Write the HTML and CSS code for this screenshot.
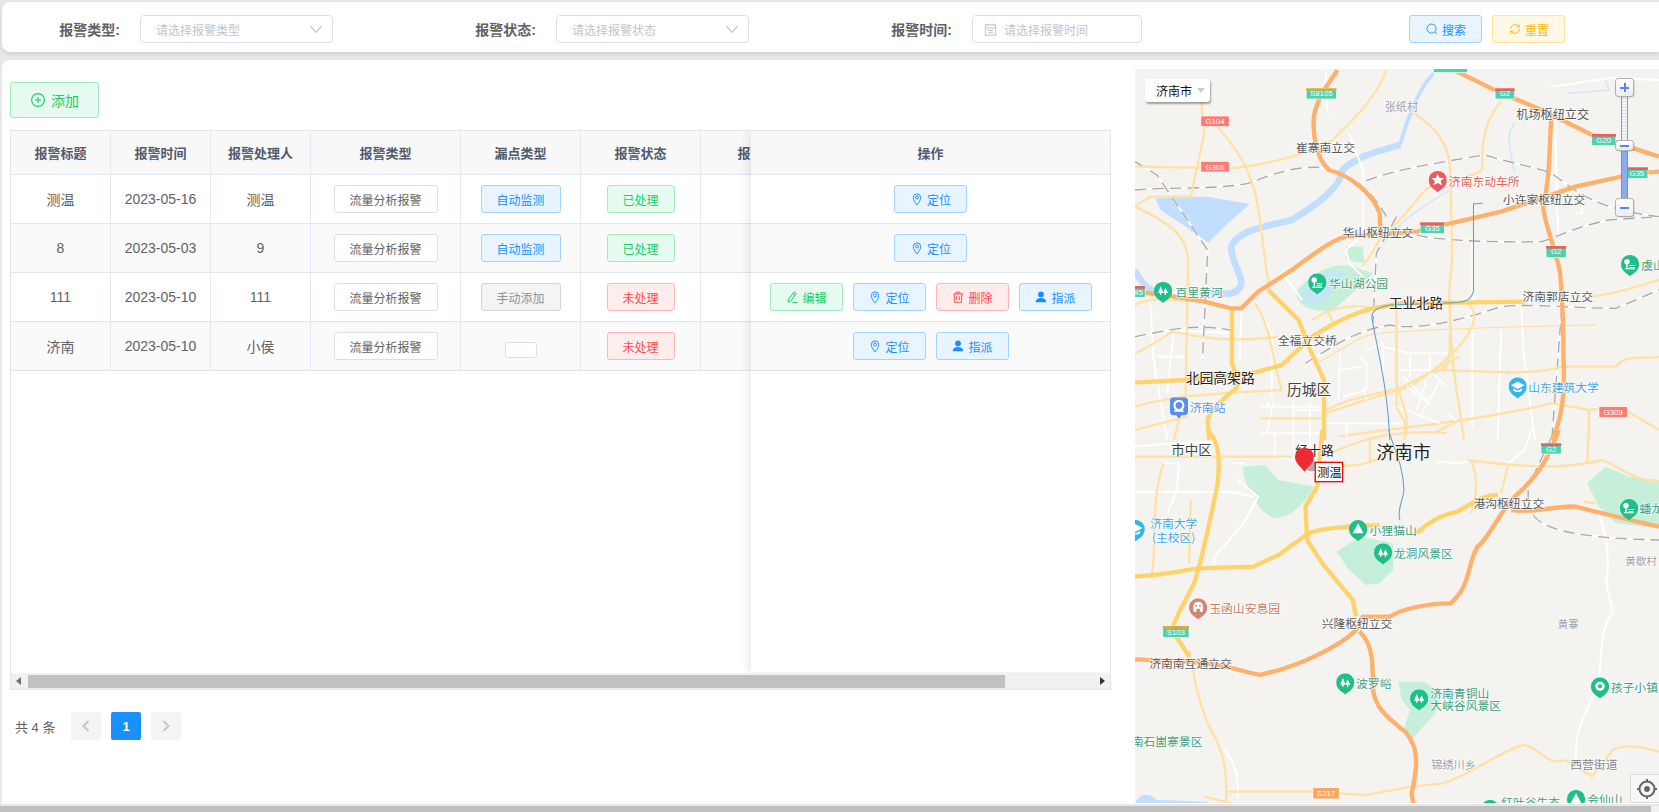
FILE: index.html
```html
<!DOCTYPE html>
<html lang="zh-CN">
<head>
<meta charset="utf-8">
<title>报警管理</title>
<link rel="stylesheet" href="styles.css">
</head>
<body>
<svg class="defs" aria-hidden="true">
  <symbol id="i-search" viewBox="0 0 16 16"><circle cx="7.5" cy="7.5" r="5.2"/><path d="M11.4 11.4l2.4 2.4"/></symbol>
  <symbol id="i-refresh" viewBox="0 0 16 16"><path d="M3 8a5 5 0 0 1 8.6-3.5l1 1.2M13 8a5 5 0 0 1-8.6 3.5l-1-1.2"/><path d="M12.8 2.6v3.2H9.8M3.2 13.4v-3.2h3"/></symbol>
  <symbol id="i-cal" viewBox="0 0 16 16"><rect x="2.5" y="3" width="11" height="11"/><path d="M2.5 6.5h11M5 9h6M5 11.5h6M5 1.5V4M11 1.5V4"/></symbol>
  <symbol id="i-plus" viewBox="0 0 16 16"><circle cx="8" cy="8" r="6.4"/><path d="M8 5v6M5 8h6"/></symbol>
  <symbol id="i-pin" viewBox="0 0 16 16"><path d="M8 14.8C5.6 11.8 3.8 9.2 3.8 6.3a4.2 4.2 0 0 1 8.4 0c0 2.9-1.8 5.5-4.2 8.5z"/><circle cx="8" cy="6.3" r="1.7"/></symbol>
  <symbol id="i-edit" viewBox="0 0 16 16"><path d="M10.5 2L13 4 6.5 12.5 3.5 14l.4-3.4zM9 4l2.500 2M8.500 14.300h5.500"/></symbol>
  <symbol id="i-trash" viewBox="0 0 16 16"><path d="M2.500 4.500h11M5.800 4.500V2.500h4.400v2M3.800 4.500v9.500h8.400V4.500M6.500 7v4.500M9.500 7v4.500"/></symbol>
  <symbol id="i-user" viewBox="0 0 16 16"><circle class="solid" cx="8" cy="5" r="3.300"/><path class="solid" d="M1.800 14c.3-3.300 2.600-5 6.200-5s5.900 1.700 6.200 5z"/></symbol>
  <symbol id="i-chev" viewBox="0 0 16 16"><path d="M3 5.500l5 5.500 5-5.500"/></symbol>
  <symbol id="i-left" viewBox="0 0 16 16"><path d="M10.500 3L5.500 8l5 5"/></symbol>
  <symbol id="i-right" viewBox="0 0 16 16"><path d="M5.500 3l5 5-5 5"/></symbol>

  <symbol id="m-tree" viewBox="0 0 54 64"><path d="M27 64C22 57 0 50 0 27a27 27 0 0 1 54 0c0 23-22 30-27 37z"/><path class="mw" d="M20 14l-8 20h6v6h4v-6h6zM34 18l-7 16h5v6h4v-6h6z"/></symbol>
  <symbol id="m-mount" viewBox="0 0 54 64"><path d="M27 64C22 57 0 50 0 27a27 27 0 0 1 54 0c0 23-22 30-27 37z"/><path class="mw" d="M27 10L11 40h32z"/></symbol>
  <symbol id="m-park" viewBox="0 0 54 64"><path d="M27 64C22 57 0 50 0 27a27 27 0 0 1 54 0c0 23-22 30-27 37z"/><circle class="mw" cx="18" cy="20" r="8"/><path class="mw" d="M16 26h4v14h-4zM24 30h18v3H24zM26 36h14v3H26zM12 40h30v3H12z"/></symbol>
  <symbol id="m-star" viewBox="0 0 54 64"><path d="M27 64C22 57 0 50 0 27a27 27 0 0 1 54 0c0 23-22 30-27 37z"/><path class="mw" d="M27 9l5.500 12h13l-10 9 4 13L27 36l-12.500 7 4-13-10-9h13z"/></symbol>
  <symbol id="m-cap" viewBox="0 0 54 64"><path d="M27 64C22 57 0 50 0 27a27 27 0 0 1 54 0c0 23-22 30-27 37z"/><path class="mw" d="M27 13L7 24l20 11 20-11zM14 33v7c7 5 19 5 26 0v-7l-13 7z"/></symbol>
  <symbol id="m-gate" viewBox="0 0 54 64"><path d="M27 64C22 57 0 50 0 27a27 27 0 0 1 54 0c0 23-22 30-27 37z"/><path class="mw" d="M27 10c-9 0-14 6-14 14v16h9v-9h10v9h9V24c0-8-5-14-14-14zM19 20h5v5h-5zM30 20h5v5h-5z"/></symbol>
  <symbol id="m-ring" viewBox="0 0 54 64"><path d="M27 64C22 57 0 50 0 27a27 27 0 0 1 54 0c0 23-22 30-27 37z"/><circle class="mw" cx="27" cy="27" r="14"/><circle cx="27" cy="27" r="6"/></symbol>
  <symbol id="m-train" viewBox="0 0 54 64"><path d="M12 0h30a12 12 0 0 1 12 12v30a12 12 0 0 1-12 12H35l-8 10-8-10h-7A12 12 0 0 1 0 42V12A12 12 0 0 1 12 0z"/><path class="mw" d="M27 8c-10 0-16 6-16 16 0 7 3 12 6 15h-4v4h28v-4h-4c3-3 6-8 6-15 0-10-6-16-16-16zm0 6c6 0 10 4 10 10s-4 11-10 11-10-5-10-11 4-10 10-10z"/></symbol>
</svg>

<div class="page">
  <header class="filters">
    <div class="field"><span class="field-label">报警类型:</span>
      <div class="select"><span>请选择报警类型</span><svg class="ico chev"><use href="#i-chev"/></svg></div></div>
    <div class="field"><span class="field-label">报警状态:</span>
      <div class="select"><span>请选择报警状态</span><svg class="ico chev"><use href="#i-chev"/></svg></div></div>
    <div class="field"><span class="field-label">报警时间:</span>
      <div class="date"><svg class="ico"><use href="#i-cal"/></svg><span>请选择报警时间</span></div></div>
    <div class="actions">
      <button class="btn blue"><svg class="ico"><use href="#i-search"/></svg>搜索</button>
      <button class="btn orange"><svg class="ico"><use href="#i-refresh"/></svg>重置</button>
    </div>
  </header>

  <main class="panel">
    <section class="left">
      <button class="add"><svg class="ico"><use href="#i-plus"/></svg>添加</button>
      <div class="table-wrap">
        <div class="table-view">
          <table class="grid">
            <colgroup><col class="c100"><col class="c100"><col class="c100"><col class="c150"><col class="c120"><col class="c120"><col class="c126"></colgroup>
            <thead><tr><th>报警标题</th><th>报警时间</th><th>报警处理人</th><th>报警类型</th><th>漏点类型</th><th>报警状态</th><th>报警内容</th></tr></thead>
            <tbody>
              <tr><td>测温</td><td>2023-05-16</td><td>测温</td><td><span class="tag plain wide">流量分析报警</span></td><td><span class="tag blue mid">自动监测</span></td><td><span class="tag green nar">已处理</span></td><td></td></tr>
              <tr class="alt"><td>8</td><td>2023-05-03</td><td>9</td><td><span class="tag plain wide">流量分析报警</span></td><td><span class="tag blue mid">自动监测</span></td><td><span class="tag green nar">已处理</span></td><td></td></tr>
              <tr><td>111</td><td>2023-05-10</td><td>111</td><td><span class="tag plain wide">流量分析报警</span></td><td><span class="tag gray mid">手动添加</span></td><td><span class="tag red nar">未处理</span></td><td></td></tr>
              <tr class="alt"><td>济南</td><td>2023-05-10</td><td>小侯</td><td><span class="tag plain wide">流量分析报警</span></td><td><span class="tag plain empty"></span></td><td><span class="tag red nar">未处理</span></td><td></td></tr>
            </tbody>
          </table>
          <div class="fixed-col">
            <table class="grid full">
              <thead><tr><th>操作</th></tr></thead>
              <tbody>
                <tr><td><div class="ops"><button class="btn blue"><svg class="ico"><use href="#i-pin"/></svg>定位</button></div></td></tr>
                <tr class="alt"><td><div class="ops"><button class="btn blue"><svg class="ico"><use href="#i-pin"/></svg>定位</button></div></td></tr>
                <tr><td><div class="ops">
                  <button class="btn green"><svg class="ico"><use href="#i-edit"/></svg>编辑</button>
                  <button class="btn blue"><svg class="ico"><use href="#i-pin"/></svg>定位</button>
                  <button class="btn red"><svg class="ico"><use href="#i-trash"/></svg>删除</button>
                  <button class="btn blue"><svg class="ico"><use href="#i-user"/></svg>指派</button>
                </div></td></tr>
                <tr class="alt"><td><div class="ops">
                  <button class="btn blue"><svg class="ico"><use href="#i-pin"/></svg>定位</button>
                  <button class="btn blue"><svg class="ico"><use href="#i-user"/></svg>指派</button>
                </div></td></tr>
              </tbody>
            </table>
          </div>
        </div>
        <div class="hscroll">
          <span class="arrow arrow-l"></span>
          <span class="thumb"></span>
          <span class="arrow arrow-r"></span>
        </div>
      </div>
      <nav class="pager">
        <span class="total">共 4 条</span>
        <span class="pg muted"><svg class="ico"><use href="#i-left"/></svg></span>
        <span class="pg on">1</span>
        <span class="pg muted"><svg class="ico"><use href="#i-right"/></svg></span>
      </nav>
    </section>

    <section class="map">
      <svg class="map-svg" viewBox="1135 69 524 735" preserveAspectRatio="none">
        <defs>
          <path id="rail-a" d="M15 305L80 345 230 570 215 900M15 390C120 380 250 390 350 370 430 340 480 320 560 322 640 340 700 365 760 470M700 362C780 330 900 310 1050 285 1130 310 1220 325 1250 340 1340 410 1400 450 1568 470M850 525C900 540 1060 548 1220 545 1270 530 1320 500 1420 480L1568 470M790 470L730 580 720 790M15 830C120 810 180 790 300 810M520 910C600 860 670 810 770 795 850 810 950 790 1100 740 1200 730 1300 745 1440 745L1568 690M1280 740L1250 1140"/>
          <path id="rail-b" d="M1180 180V210M1195 255C1230 310 1380 325 1568 330M1250 20L1190 150"/>
        </defs>
        <rect x="1135" y="69" width="524" height="735" class="land"/>

        <g transform="translate(1130 60) scale(.3374 .3333)">
          <path class="water" d="M75 415L230 410 355 432 290 490 232 548 150 490 90 450Z"/>
          <path class="river narrow" d="M900 40C860 80 830 150 800 255"/>
          <path class="river" d="M800 255C760 270 680 280 630 330 625 380 560 430 480 480 400 500 320 510 300 560 300 620 350 660 320 690 300 705 280 705 240 695"/>
          <path class="river" d="M15 630C30 665 50 690 90 700"/>
          <path class="brook" d="M950 390C900 420 800 470 730 580"/>
          <path class="brook" d="M1140 190C1110 220 1130 280 1140 340M1300 100L1420 90 1410 60"/>
          <path class="park" d="M640 560L690 560 695 610 640 600Z"/>
          <path class="park" d="M490 700C530 640 620 590 690 630L720 640C680 680 640 720 600 750 540 760 500 740 490 700Z"/>
          <path class="lake" d="M505 700C540 645 600 615 640 640 600 680 610 720 560 730 530 740 500 730 505 700Z"/>

          <path class="white" d="M580 30L585 160M650 220L690 330 692 520 640 570 650 610 690 650M720 560L690 630M60 730L70 900 110 1140M15 830L130 810 300 820M80 890H170M130 810L110 1000M330 760L325 900M370 730L420 820 420 1010M460 650L510 720M1015 530V1100M1100 810L1090 1140M1160 740L1165 860 1200 1140M1340 420V460H1320M1260 170L1265 420 1270 530M1250 80L1420 55 1568 60"/>

          <use class="rail-base" href="#rail-a"/>
          <use class="rail" href="#rail-a"/>

          <path class="minor" d="M760 30C730 120 640 200 600 240 530 280 430 310 300 325L15 320M205 60L220 220 180 410 60 410 15 440M260 200C320 270 370 340 385 480 400 600 410 680 415 700M830 150C900 200 950 240 950 350L955 600 945 700 955 900 990 1140M1100 125C1050 180 1040 260 1045 330 1000 360 930 360 880 385L800 480 740 540 690 620M15 440C100 480 170 520 172 600L165 1000 130 1140M15 735C60 710 100 720 165 720M440 830C300 850 200 830 125 815 60 860 15 880 15 880M450 990C300 1000 150 1000 15 1040M15 1110L170 1070M370 730C420 800 420 900 450 990M585 755L610 800M1000 730C1050 770 1000 850 900 930L830 980 700 1020 580 1060M540 780C600 740 660 730 720 745M790 740L790 1040 815 1090V1140M900 930C1000 930 1200 950 1280 920L1440 920C1470 880 1520 900 1568 890M620 1130C800 1100 1000 1090 1250 1030L1360 1050 1450 1040 1568 1110M1360 1050V1140M1370 710C1450 700 1500 680 1568 660"/>
          <path class="minor thin" d="M740 820C900 805 1150 800 1380 795M550 910C620 880 680 820 740 820"/>
        </g>

        <g transform="translate(1260 300) scale(.3333)">
          <path class="white fine" d="M0 320H190M20 320L30 300M100 300V440M150 310V440M40 310L20 400M0 400H180M45 400V470M100 330H190M240 160L235 300M240 210L310 200M300 170L320 190V270L250 290M310 260L320 300M315 150L370 130V220M370 140L450 160H570M450 165V230M510 165V230M420 210H510L560 260M430 230L500 300M440 260L520 320M500 240L470 330M540 240L480 350M410 320L540 370M200 370H430M560 340L600 370M260 375V420M40 470L100 480"/>
          <path class="minor" d="M0 355H190M190 340C220 310 300 290 420 265L580 180 600 170M410 60V250L440 350V400M570 0V150L560 200 520 220M560 400C500 390 430 400 380 405 300 420 260 440 180 470M330 420V490M245 495C300 505 350 480 400 450M600 360L520 400"/>
        </g>

        <g transform="translate(1130 60) scale(.3374 .3333)">
          <path class="main" d="M15 968L160 960 360 940 450 915 540 830C600 790 660 760 720 745L800 730 1170 725"/>
          <path class="main" d="M302 750L302 910C310 930 325 970 315 985 300 1000 240 1040 230 1080L235 1140"/>
          <path class="main" d="M410 690L500 780 530 860 575 960 575 1140"/>
          <path class="hw" d="M615 30C590 70 555 110 545 170 540 230 555 300 590 330 650 345 720 400 740 460L742 510"/>
          <path class="hw" d="M960 30L1090 95 1220 150 1370 225 1568 290"/>
          <path class="hw" d="M1250 170C1240 250 1250 330 1225 440 1225 480 1260 560 1275 640 1280 700 1285 800 1285 900 1290 1000 1280 1080 1250 1140"/>
          <path class="hw" d="M1568 335L1500 340 1320 380 1100 455 930 495 850 515 640 530C600 540 560 570 480 630L380 695 330 745H300L220 725 100 705 15 695"/>
          <path class="blue-line" d="M1045 430L1018 432 1018 690C1015 715 1000 727 960 728L770 735C720 745 710 760 720 790 740 900 765 1000 770 1140"/>

          <g class="shield"><rect x="522" y="85" width="90" height="32"/><path class="gold" d="M522 85h90v7h-90z"/><text x="567" y="108">S8105</text></g>
          <g class="shield"><rect x="900" y="10" width="100" height="28"/></g>
          <g class="shield"><rect x="1082" y="85" width="58" height="32"/><path class="band" d="M1082 85h58v8h-58z"/><text x="1111" y="108">G2</text></g>
          <g class="shield"><rect x="1368" y="222" width="72" height="34"/><path class="band" d="M1368 222h72v8h-72z"/><text x="1404" y="248">G20</text></g>
          <g class="shield"><rect x="1470" y="322" width="65" height="34"/><path class="band" d="M1470 322h65v8h-65z"/><text x="1502" y="348">G35</text></g>
          <g class="shield"><rect x="860" y="487" width="72" height="34"/><path class="band" d="M860 487h72v8h-72z"/><text x="896" y="513">G35</text></g>
          <g class="shield"><rect x="1233" y="558" width="60" height="34"/><path class="band" d="M1233 558h60v8h-60z"/><text x="1263" y="583">G2</text></g>
          <g class="shield"><rect x="-20" y="678" width="65" height="34"/><path class="band" d="M-20 678h65v8h-65z"/><text x="25" y="704">85</text></g>
          <g class="shield red-s"><rect x="210" y="168" width="84" height="32"/><text x="252" y="192">G104</text></g>
          <g class="shield red-s"><rect x="210" y="304" width="84" height="32"/><text x="252" y="329">G308</text></g>
          <g class="shield red-s"><rect x="1390" y="1040" width="84" height="32"/><text x="1432" y="1065">G309</text></g>

          <use href="#m-star" class="p-red" x="885" y="333" width="54" height="64"/>
          <use href="#m-tree" class="p-green" x="71" y="665" width="54" height="64"/>
          <use href="#m-park" class="p-green" x="528" y="640" width="54" height="64"/>
          <use href="#m-park" class="p-green" x="1455" y="585" width="54" height="64"/>
          <use href="#m-cap" class="p-sky" x="1122" y="952" width="54" height="64"/>
          <use href="#m-train" class="p-blue" x="118" y="1012" width="54" height="64"/>

          <text class="lb l-gray s33" x="755" y="153">张纸村</text>
          <text class="lb s36" x="1145" y="178">机场枢纽立交</text>
          <text class="lb s35" x="492" y="277">崔寨南立交</text>
          <text class="lb l-red s35" x="945" y="377">济南东动车所</text>
          <text class="lb s35" x="1105" y="431">小许家枢纽立交</text>
          <text class="lb s35" x="630" y="530">华山枢纽立交</text>
          <text class="lb l-green s35" x="590" y="685">华山湖公园</text>
          <text class="lb l-green s35" x="135" y="710">百里黄河</text>
          <text class="lb l-green s35" x="1515" y="630">虞山</text>
          <text class="lb l-dark s40" x="768" y="745">工业北路</text>
          <text class="lb s35" x="1163" y="722">济南郭店立交</text>
          <text class="lb s35" x="438" y="855">全福立交桥</text>
          <text class="lb l-dark s41" x="165" y="970">北园高架路</text>
          <text class="lb l-mid s44" x="465" y="1005">历城区</text>
          <text class="lb l-sky s35" x="1180" y="995">山东建筑大学</text>
          <text class="lb l-blue s35" x="178" y="1056">济南站</text>
        </g>

        <g transform="translate(1130 430) scale(.3374 .3333)">
          <path class="park" d="M335 110L400 105 440 150 545 170C520 220 480 260 430 265 390 250 370 220 370 190 340 170 335 130 335 110Z"/>
          <path class="park" d="M612 365L680 320 780 340 780 420 740 460 700 465 650 420Z"/>
          <path class="park" d="M795 755L870 755 925 790 905 850 860 900 830 935 810 900 830 840 805 810Z"/>
          <path class="park" d="M1355 160L1410 110 1480 140 1568 150V295L1440 280 1390 230Z"/>
          <path class="water" d="M15 1120C30 1090 50 1085 80 1110L230 1115V1125H15Z"/>

          <path class="white" d="M15 50L120 40 250 35M15 185H300L370 200M100 100L145 100 140 180 110 250M320 150L380 200 330 290 250 380V410M910 95C950 100 1000 100 1010 90M1190 0L1170 60 1120 100 1100 190M300 100H340M1385 240C1410 300 1420 360 1415 430 1400 470 1440 540 1430 550 1390 600 1400 680 1390 740 1380 800 1340 850 1325 920L1320 990M280 960C320 1010 320 1050 320 1100"/>
          <use class="rail-base" href="#rail-b"/>
          <use class="rail" href="#rail-b"/>

          <path class="minor" d="M1000 90C1150 110 1280 120 1400 90 1450 110 1490 150 1568 155M1120 105L1100 190M1010 90C1040 160 1020 220 1010 250M15 80H480M100 100C60 200 80 350 65 430M180 210L175 400M1360 0L1355 100M480 340L440 375M175 660C190 720 190 780 230 880 270 950 290 1000 285 1120M290 1085H540L620 1090 700 1095 835 1070 930 1060C1000 1040 1100 960 1170 945 1220 960 1240 1010 1290 990L1370 1040 1430 960C1470 940 1520 950 1568 965M1345 215L1380 220M220 1100L300 1120"/>

          <path class="main" d="M230 0C270 40 265 100 260 160 240 260 210 400 190 460 160 520 130 570 125 600L175 680"/>
          <path class="main" d="M15 440L100 432 200 415 365 410 440 375 530 310C560 295 640 290 740 285M850 310C880 280 920 255 970 245 1010 225 1040 195 1090 195"/>
          <path class="main" d="M570 0L555 170 520 230 525 330 570 400 660 510 670 560"/>
          <path class="hw" d="M1270 0C1250 60 1220 130 1140 200 1100 240 1060 330 1030 350 1000 400 1010 470 950 520 870 520 800 540 770 560L690 560 670 600C620 650 500 710 385 735 330 725 280 700 170 695L15 688"/>
          <path class="hw" d="M680 605C720 640 720 700 720 780 730 850 790 880 820 910 860 960 850 1020 835 1090L840 1125"/>
          <path class="hw" d="M1130 240C1200 250 1280 225 1320 230 1400 250 1480 270 1568 290"/>
          <path class="blue-line" d="M767 0C775 40 810 100 812 180 810 210 790 240 800 270"/>

          <g class="shield"><rect x="1218" y="40" width="60" height="32"/><path class="band" d="M1218 40h60v8h-60z"/><text x="1248" y="66">G2</text></g>
          <g class="shield"><rect x="97" y="588" width="78" height="34"/><path class="gold" d="M97 588h78v8H97z"/><text x="136" y="614">S103</text></g>
          <g class="shield org-s"><rect x="542" y="1073" width="78" height="34"/><text x="581" y="1098">S317</text></g>

          <use href="#m-cap" class="p-sky" x="-10" y="270" width="54" height="64"/>
          <use href="#m-mount" class="p-green" x="649" y="270" width="54" height="64"/>
          <use href="#m-tree" class="p-green" x="723" y="340" width="54" height="64"/>
          <use href="#m-park" class="p-green" x="1452" y="207" width="54" height="64"/>
          <use href="#m-gate" class="p-brown" x="175" y="505" width="54" height="64"/>
          <use href="#m-tree" class="p-green" x="611" y="730" width="54" height="64"/>
          <use href="#m-tree" class="p-green" x="830" y="778" width="54" height="64"/>
          <use href="#m-ring" class="p-green" x="1366" y="742" width="54" height="64"/>
          <use href="#m-mount" class="p-green" x="1295" y="1080" width="54" height="64"/>
          <use href="#m-mount" class="p-green" x="1040" y="1110" width="54" height="64"/>

          <text class="lb l-mid s40" x="122" y="76">市中区</text>
          <text class="lb l-dark s38" x="490" y="75">经十路</text>
          <text class="lb l-dark s54" x="730" y="88">济南市</text>
          <text class="lb s35" x="1018" y="233">港沟枢纽立交</text>
          <text class="lb l-sky s35" x="60" y="295">济南大学</text>
          <text class="lb l-sky s35" x="65" y="335">(主校区)</text>
          <text class="lb l-green s35" x="710" y="315">小狸猫山</text>
          <text class="lb l-green s35" x="782" y="385">龙洞风景区</text>
          <text class="lb l-green s35" x="1510" y="250">蟠龙</text>
          <text class="lb l-brown s35" x="235" y="550">玉函山安息园</text>
          <text class="lb l-gray s31" x="1468" y="405">黄歇村</text>
          <text class="lb l-gray s31" x="1268" y="595">黄寨</text>
          <text class="lb s35" x="568" y="593">兴隆枢纽立交</text>
          <text class="lb s35" x="57" y="715">济南南互通立交</text>
          <text class="lb l-green s35" x="670" y="773">波罗峪</text>
          <text class="lb l-green s35" x="890" y="803">济南青铜山</text>
          <text class="lb l-green s35" x="890" y="841">大峡谷风景区</text>
          <text class="lb l-green s35" x="1425" y="785">孩子小镇</text>
          <text class="lb l-green s35" x="5" y="948">南石崮寨景区</text>
          <text class="lb l-gray s33" x="893" y="1018">锦绣川乡</text>
          <text class="lb l-gray2 s35" x="1305" y="1018">西营街道</text>
          <text class="lb l-green s35" x="1100" y="1132">红叶谷生态</text>
          <text class="lb l-green s35" x="1355" y="1122">会仙山</text>

          <ellipse class="pin-shadow" cx="538" cy="108" rx="18" ry="16"/>
          <path class="pin" d="M517 125C505 108 489 98 489 80a28 27 0 0 1 56 0c0 18-16 28-28 45z"/>
          <rect class="mk-box" x="549" y="97" width="81" height="58"/>
          <text class="mk-text" x="555" y="140">测温</text>
        </g>
      </svg>

      <div class="city"><span>济南市</span><i class="city-caret"></i></div>
      <div class="zoom">
        <span class="track"></span>
        <span class="level"></span>
        <span class="zb plus"></span>
        <span class="knob"></span>
        <span class="zb minus"></span>
      </div>
      <div class="locate"><svg viewBox="0 0 24 24"><circle cx="12" cy="12" r="9"/><circle class="dot" cx="12" cy="12" r="3.500"/><path d="M12 0v3.500M12 20.500V24M0 12h3.500M20.500 12H24"/></svg></div>
    </section>
  </main>
  <div class="page-scroll"></div>
</div>
</body>
</html>
```

FILE: styles.css
```css
* { box-sizing: border-box; }
html, body { margin: 0; height: 100%; }
body {
  overflow: hidden;
  background: #e8e8e8;
  color: #606266;
  font-family: "Liberation Sans", "Noto Sans CJK SC", sans-serif;
  font-size: 14px;
}
.defs { display: none; }
.ico {
  width: 12px; height: 12px; flex: none;
  fill: none; stroke: currentColor; stroke-width: 1.1;
}
.solid { fill: currentColor; stroke: none; }

.page { height: 812px; padding: 2px 0 0 2px; display: flex; flex-direction: column; }

/* filter bar */
.filters {
  height: 50px; flex: none; display: flex; align-items: center; padding-top: 4px;
  background: #fff; border-radius: 8px 0 0 8px;
  box-shadow: 0 2px 4px rgba(0,0,0,.1);
  margin-bottom: 8px;
}
.field { width: 416px; flex: none; display: flex; align-items: center; }
.field-label { width: 138px; padding-right: 20px; text-align: right; font-weight: 700; color: #606266; }
.select, .date {
  height: 28px; border: 1px solid #dcdfe6; border-radius: 4px; background: #fff;
  font-size: 12px; color: #c0c4cc; display: flex; align-items: center;
}
.select { width: 193px; padding: 0 7px 0 15px; justify-content: space-between; }
.date { width: 170px; padding-left: 10px; gap: 6px; }
.date .ico { width: 15px; height: 15px; }
.chev { width: 18px; height: 18px; }
.actions { display: flex; gap: 10px; padding-left: 159px; }

/* buttons */
.btn {
  height: 28px; width: 73px; padding: 0; border-radius: 3px; border: 1px solid;
  display: inline-flex; align-items: center; justify-content: center; gap: 3px;
  font: 12px "Liberation Sans", "Noto Sans CJK SC", sans-serif;
}
.btn .ico { width: 14px; height: 14px; }
.btn.blue, .tag.blue { color: #1890ff; background: #e8f4ff; border-color: #a3d3ff; }
.btn.orange { color: #ffba00; background: #fff8e6; border-color: #ffe399; }
.btn.green, .tag.green { color: #13ce66; background: #e7faf0; border-color: #a1ebc2; }
.btn.red, .tag.red { color: #ff4949; background: #ffeded; border-color: #ffb6b6; }
.tag.gray { color: #909399; background: #f4f4f5; border-color: #d3d4d6; }
.tag.plain { color: #606266; background: #fff; border-color: #dcdfe6; }

/* panel */
.panel {
  height: 744px; flex: none; display: flex; align-items: flex-start; gap: 24px;
  background: #fff; border-radius: 8px 0 0 0; padding-left: 8px;
}
.left { width: 1101px; flex: none; padding-top: 22px; }
.add {
  width: 89px; height: 36px; padding: 0; border: 1px solid #a1ebc2; border-radius: 3px;
  background: #e7faf0; color: #13ce66;
  display: flex; align-items: center; justify-content: center; gap: 5px;
  font: 14px "Liberation Sans", "Noto Sans CJK SC", sans-serif;
  margin-bottom: 12px;
}
.add .ico { width: 16px; height: 16px; }

/* table */
.table-wrap {
  height: 560px; border: 1px solid #dfe6ec; border-bottom-color: #e6e6ee;
  display: flex; flex-direction: column;
}
.table-view { position: relative; flex: 1; overflow: hidden; }
.grid { border-collapse: separate; border-spacing: 0; table-layout: fixed; width: 816px; }
.grid.full { width: 100%; }
.c100 { width: 100px; } .c150 { width: 150px; } .c120 { width: 120px; } .c126 { width: 126px; }
.grid th, .grid td {
  text-align: center; padding: 0; border-right: 1px solid #e4e9ef; border-bottom: 1px solid #dfe6ec;
}
.grid th {
  height: 44px; background: #f8f8f9; color: #515a6e; font-size: 13px; font-weight: 700;
}
.grid td { height: 49px; background: #fff; }
.grid .alt td { background: #fafafa; }
.tag {
  display: inline-flex; align-items: center; justify-content: center;
  height: 28px; border: 1px solid; border-radius: 3px; font-size: 12px; vertical-align: middle;
}
.wide { width: 104px; } .mid { width: 80px; } .nar { width: 68px; }
.empty { width: 32px; height: 16px; margin-top: 8px; }
.fixed-col {
  position: absolute; top: 0; right: 0; bottom: 1px; width: 359px;
  background: #fff; box-shadow: -3px 0 8px rgba(0,0,0,.09);
}
.fixed-col .grid th, .fixed-col .grid td { border-right: 0; }
.ops { display: flex; justify-content: center; gap: 10px; }

.hscroll { height: 16px; flex: none; background: #f1f1f1; display: flex; align-items: stretch; }
.arrow { width: 17px; flex: none; position: relative; }
.arrow::after { content: ""; position: absolute; top: 4px; border: 4px solid transparent; }
.arrow-l::after { left: 5px; border-right: 5px solid #707070; border-left: 0; }
.arrow-r::after { right: 5px; border-left: 5px solid #333; border-right: 0; }
.thumb { width: 977px; flex: none; background: #c1c1c1; margin: 2px 0 1px; }
.hscroll .arrow-r { margin-left: auto; }

/* pager */
.pager { display: flex; align-items: center; margin-top: 22px; padding-left: 5px; height: 28px; font-size: 13px; }
.total { width: 56px; }
.pg {
  width: 30px; height: 28px; border-radius: 2px; margin-right: 10px;
  display: flex; align-items: center; justify-content: center;
  background: #f4f4f5; font-weight: 700; color: #606266;
}
.pg.muted { color: #c0c4cc; }
.pg.muted .ico { width: 16px; height: 16px; stroke-width: 1.800; }
.pg.on { background: #1890ff; color: #fff; }

/* map */
.map { position: relative; width: 524px; height: 734px; margin-top: 9px; flex: none; overflow: hidden; }
.map-svg { display: block; width: 524px; height: 735px; }
.land { fill: #f4f3f0; }
.water { fill: #c2deff; }
.river { fill: none; stroke: #c2deff; stroke-width: 20; stroke-linejoin: round; }
.river.narrow { stroke-width: 11; }
.brook { fill: none; stroke: #d3e8fb; stroke-width: 5; }
.park { fill: #c5efd9; }
.lake { fill: #c5e7f3; }
.white { fill: none; stroke: #fff; stroke-width: 6; }
.white.fine { stroke-width: 5; }
.rail-base { fill: none; stroke: #fff; stroke-width: 6; }
.rail { fill: none; stroke: #a7a8a8; stroke-width: 4; stroke-dasharray: 34 18; }
.minor { fill: none; stroke: #ffe1a6; stroke-width: 7; stroke-linejoin: round; }
.minor.thin { stroke-width: 4; }
.main { fill: none; stroke: #ffd36b; stroke-width: 13; stroke-linejoin: round; }
.hw { fill: none; stroke: #ffb06b; stroke-width: 13; stroke-linejoin: round; }
.blue-line { fill: none; stroke: #5b9bd8; stroke-width: 3; }
.shield rect { fill: #4fd1b0; stroke: #fff; stroke-width: 2; }
.shield .band { fill: #e8605c; }
.shield .gold { fill: #e0a92f; }
.shield text {
  fill: #fff; font-family: "Liberation Sans", sans-serif; font-size: 23px; text-anchor: middle;
}
.shield.red-s rect { fill: #ff7a70; }
.shield.org-s rect { fill: #f6a860; }
.mw { fill: #fff; }
.p-green { fill: #1fbf8c; }
.p-red { fill: #ea5a5f; }
.p-sky { fill: #35b5ee; }
.p-blue { fill: #5a8ff0; }
.p-brown { fill: #d28571; }
.lb {
  font-family: "Noto Sans CJK SC", sans-serif; fill: #555a62;
  stroke: #fff; stroke-width: 5px; stroke-opacity: .75; paint-order: stroke; stroke-linejoin: round;
}
.l-gray { fill: #98a0ac; }
.l-gray2 { fill: #7c8794; }
.l-red { fill: #e4625f; }
.l-green { fill: #38a07f; }
.l-sky { fill: #3fa9e6; }
.l-blue { fill: #5a8ff0; }
.l-brown { fill: #c47a62; }
.l-dark { fill: #222; }
.l-mid { fill: #444; }
.s31 { font-size: 31px; } .s33 { font-size: 33px; } .s35 { font-size: 35px; } .s36 { font-size: 36px; }
.s38 { font-size: 38px; } .s40 { font-size: 40px; } .s41 { font-size: 41px; } .s44 { font-size: 44px; } .s54 { font-size: 54px; }
.pin-shadow { fill: #8d8d8d; opacity: .7; }
.pin { fill: #ee2a33; }
.mk-box { fill: #fff; stroke: #f00; stroke-width: 4; }
.mk-text { font-family: "Noto Sans CJK SC", sans-serif; font-size: 36px; fill: #111; }

.city {
  position: absolute; left: 10px; top: 10px; width: 65px; height: 23px;
  background: #fff; border-radius: 3px; box-shadow: 1px 2px 2px rgba(0,0,0,.35);
  display: flex; align-items: center; padding-left: 11px; gap: 5px;
  font: 12px "Noto Sans CJK SC", sans-serif; color: #111;
}
.city-caret { width: 0; height: 0; border: 4px solid transparent; border-top: 5px solid #ccc; border-bottom: 0; }
.zoom { position: absolute; left: 481px; top: 10px; width: 17px; height: 137px; }
.zb, .knob {
  position: absolute; left: 0; width: 17px; background: linear-gradient(#fff, #ececf0);
  border-radius: 3px; box-shadow: 0 0 0 1px #b0b0b0, 1px 1px 2px rgba(0,0,0,.35);
}
.zb { height: 17px; }
.plus { top: 0; }
.minus { bottom: 0; }
.knob { top: 62px; height: 9px; }
.plus::before, .minus::before, .knob::before {
  content: ""; position: absolute; left: 4px; right: 4px; top: 50%; height: 2px; margin-top: -1px; background: #5a86e6;
}
.plus::after {
  content: ""; position: absolute; top: 4px; bottom: 4px; left: 50%; width: 2px; margin-left: -1px; background: #5a86e6;
}
.track {
  position: absolute; left: 6px; width: 5px; top: 17px; bottom: 17px;
  background: repeating-linear-gradient(#f4f4f4 0 2px, #dedede 2px 3px); box-shadow: 0 0 0 1px #9a9a9a;
}
.level { position: absolute; left: 6px; width: 5px; top: 71px; bottom: 17px; background: #8fabf0; box-shadow: 0 0 0 1px #8a8f9a; }
.locate {
  position: absolute; right: 0; bottom: 0; width: 29px; height: 29px;
  background: #f7f7f7; border: 1px solid #ddd; border-right: 0; border-radius: 2px 0 0 0;
  display: flex; align-items: center; justify-content: center; padding-left: 4px;
}
.locate svg { width: 20px; height: 20px; fill: none; stroke: #666; stroke-width: 2.400; }
.locate .dot { fill: #666; stroke: none; }

.page-scroll { flex: 1; margin: 2px 0 0 -2px; background: #f1f1f1; }
.page-scroll::before { content: ""; display: block; width: 1651px; height: 100%; background: #c0c0c0; }
```
